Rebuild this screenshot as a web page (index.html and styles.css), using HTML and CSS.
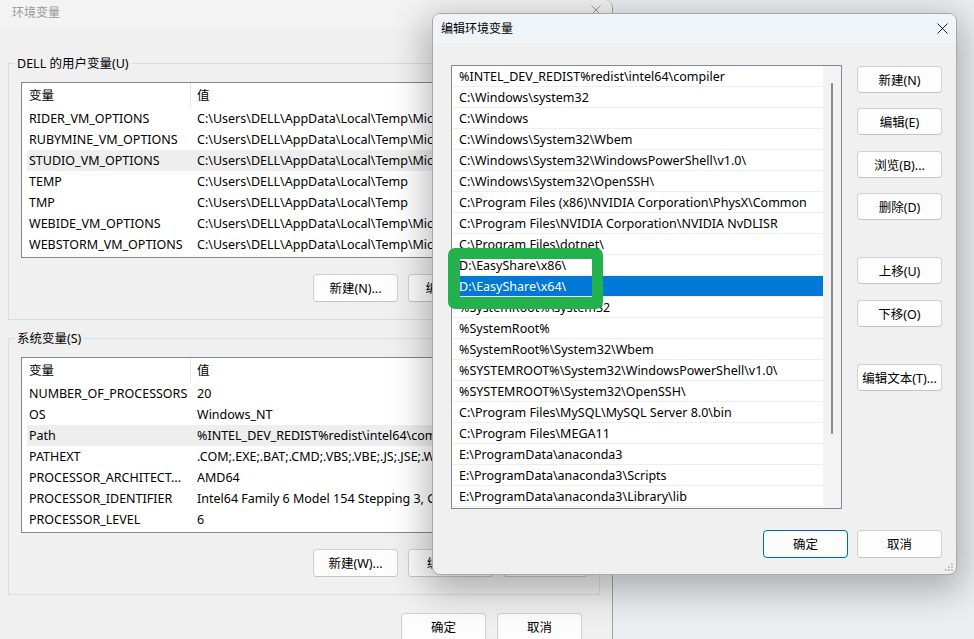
FILE: index.html
```html
<!DOCTYPE html>
<html lang="zh-CN">
<head>
<meta charset="utf-8">
<title>环境变量</title>
<link rel="stylesheet" href="styles.css">
</head>
<body>
<div class="desktop">
  <section class="env">
    <header class="env-title">
      <span class="env-title-text">环境变量</span>
      <span class="env-close"><svg width="10" height="10" viewBox="0 0 10 10"><path d="M0.5 0.5L9.5 9.5M9.5 0.5L0.5 9.5" stroke="#9a9a9a" stroke-width="1" fill="none"/></svg></span>
    </header>
    <div class="env-body">
      <div class="group">
        <span class="group-label">DELL 的用户变量(U)</span>
        <div class="table">
          <div class="thead"><span class="c1">变量</span><span class="c2">值</span></div>
          <div class="row"><span class="c1">RIDER_VM_OPTIONS</span><span class="c2">C:\Users\DELL\AppData\Local\Temp\MicrosoftEdgeDownloads\jetbra\vmoptions\rider.vmoptions</span></div>
          <div class="row"><span class="c1">RUBYMINE_VM_OPTIONS</span><span class="c2">C:\Users\DELL\AppData\Local\Temp\MicrosoftEdgeDownloads\jetbra\vmoptions\rubymine.vmoptions</span></div>
          <div class="row hl"><span class="c1">STUDIO_VM_OPTIONS</span><span class="c2">C:\Users\DELL\AppData\Local\Temp\MicrosoftEdgeDownloads\jetbra\vmoptions\studio.vmoptions</span></div>
          <div class="row"><span class="c1">TEMP</span><span class="c2">C:\Users\DELL\AppData\Local\Temp</span></div>
          <div class="row"><span class="c1">TMP</span><span class="c2">C:\Users\DELL\AppData\Local\Temp</span></div>
          <div class="row"><span class="c1">WEBIDE_VM_OPTIONS</span><span class="c2">C:\Users\DELL\AppData\Local\Temp\MicrosoftEdgeDownloads\jetbra\vmoptions\webide.vmoptions</span></div>
          <div class="row"><span class="c1">WEBSTORM_VM_OPTIONS</span><span class="c2">C:\Users\DELL\AppData\Local\Temp\MicrosoftEdgeDownloads\jetbra\vmoptions\webstorm.vmoptions</span></div>
        </div>
        <div class="group-buttons">
          <button class="btn">新建(N)...</button>
          <button class="btn">编辑(E)...</button>
          <button class="btn">删除(D)</button>
        </div>
      </div>
      <div class="group">
        <span class="group-label">系统变量(S)</span>
        <div class="table">
          <div class="thead"><span class="c1">变量</span><span class="c2">值</span></div>
          <div class="row"><span class="c1">NUMBER_OF_PROCESSORS</span><span class="c2">20</span></div>
          <div class="row"><span class="c1">OS</span><span class="c2">Windows_NT</span></div>
          <div class="row hl"><span class="c1">Path</span><span class="c2">%INTEL_DEV_REDIST%redist\intel64\compiler;C:\Windows\system32;C:\Windows;C:\Windows\System32\Wbem</span></div>
          <div class="row"><span class="c1">PATHEXT</span><span class="c2">.COM;.EXE;.BAT;.CMD;.VBS;.VBE;.JS;.JSE;.WSF;.WSH;.MSC</span></div>
          <div class="row"><span class="c1">PROCESSOR_ARCHITECT...</span><span class="c2">AMD64</span></div>
          <div class="row"><span class="c1">PROCESSOR_IDENTIFIER</span><span class="c2">Intel64 Family 6 Model 154 Stepping 3, GenuineIntel</span></div>
          <div class="row"><span class="c1">PROCESSOR_LEVEL</span><span class="c2">6</span></div>
        </div>
        <div class="group-buttons">
          <button class="btn">新建(W)...</button>
          <button class="btn">编辑(I)...</button>
          <button class="btn">删除(L)</button>
        </div>
      </div>
      <div class="dialog-buttons">
        <button class="btn">确定</button>
        <button class="btn">取消</button>
      </div>
    </div>
  </section>

  <section class="edit">
    <header class="edit-title">
      <span>编辑环境变量</span>
      <span class="edit-close"><svg width="11" height="11" viewBox="0 0 11 11"><path d="M0.5 0.5L10.5 10.5M10.5 0.5L0.5 10.5" stroke="#1a1a1a" stroke-width="1" fill="none"/></svg></span>
    </header>
    <div class="edit-body">
      <div class="edit-main">
        <div class="pathlist">
          <div class="rows">
            <div class="prow">%INTEL_DEV_REDIST%redist\intel64\compiler</div>
            <div class="prow">C:\Windows\system32</div>
            <div class="prow">C:\Windows</div>
            <div class="prow">C:\Windows\System32\Wbem</div>
            <div class="prow">C:\Windows\System32\WindowsPowerShell\v1.0\</div>
            <div class="prow">C:\Windows\System32\OpenSSH\</div>
            <div class="prow">C:\Program Files (x86)\NVIDIA Corporation\PhysX\Common</div>
            <div class="prow">C:\Program Files\NVIDIA Corporation\NVIDIA NvDLISR</div>
            <div class="prow">C:\Program Files\dotnet\</div>
            <div class="prow">D:\EasyShare\x86\</div>
            <div class="prow sel">D:\EasyShare\x64\</div>
            <div class="prow">%SystemRoot%\system32</div>
            <div class="prow">%SystemRoot%</div>
            <div class="prow">%SystemRoot%\System32\Wbem</div>
            <div class="prow">%SYSTEMROOT%\System32\WindowsPowerShell\v1.0\</div>
            <div class="prow">%SYSTEMROOT%\System32\OpenSSH\</div>
            <div class="prow">C:\Program Files\MySQL\MySQL Server 8.0\bin</div>
            <div class="prow">C:\Program Files\MEGA11</div>
            <div class="prow">E:\ProgramData\anaconda3</div>
            <div class="prow">E:\ProgramData\anaconda3\Scripts</div>
            <div class="prow">E:\ProgramData\anaconda3\Library\lib</div>
          </div>
          <div class="scroll"><div class="thumb"></div></div>
        </div>
        <div class="side">
          <button class="btn">新建(N)</button>
          <button class="btn">编辑(E)</button>
          <button class="btn">浏览(B)...</button>
          <button class="btn">删除(D)</button>
          <button class="btn sep">上移(U)</button>
          <button class="btn">下移(O)</button>
          <button class="btn sep">编辑文本(T)...</button>
        </div>
      </div>
      <div class="edit-foot">
        <button class="btn default">确定</button>
        <button class="btn">取消</button>
      </div>
    </div>
    <svg class="grip" width="9" height="9" viewBox="0 0 9 9">
      <rect x="6" y="0" width="2" height="2" fill="#c4c4c4"/>
      <rect x="3" y="3" width="2" height="2" fill="#c4c4c4"/>
      <rect x="6" y="3" width="2" height="2" fill="#c4c4c4"/>
      <rect x="0" y="6" width="2" height="2" fill="#c4c4c4"/>
      <rect x="3" y="6" width="2" height="2" fill="#c4c4c4"/>
      <rect x="6" y="6" width="2" height="2" fill="#c4c4c4"/>
    </svg>
  </section>

  <div class="mark"></div>
</div>
</body>
</html>
```

FILE: styles.css
```css
* { box-sizing: border-box; }
html, body { margin: 0; padding: 0; }
body {
  width: 974px;
  height: 639px;
  overflow: hidden;
  background: #eceef2;
  font-family: "Noto Sans", "Noto Sans CJK SC", sans-serif;
  font-size: 12.5px;
  color: #000;
}
.desktop {
  position: relative;
  width: 974px;
  height: 639px;
  overflow: hidden;
  background: #eceef2;
}

/* background window */
.env {
  position: absolute;
  left: 0;
  top: 0;
  width: 613px;
  height: 700px;
  background: #f0f0f0;
  border-right: 1px solid #a3a3a3;
  border-top-right-radius: 8px;
}
.env-title {
  height: 28px;
  display: flex;
  justify-content: space-between;
  padding: 2px 0 0 12px;
  background: #f3f3f3;
  border-top-right-radius: 8px;
  line-height: 21px;
  font-size: 12px;
  color: #9a9a9a;
}
.env-close {
  width: 32px;
  display: flex;
  justify-content: center;
  padding-top: 3px;
}
.env-body { padding: 35px 12px 0 8px; }
.group {
  position: relative;
  border: 1px solid #dcdcdc;
  padding: 18px 11px 17px 12px;
}
.group + .group { margin-top: 18px; }
.group-label {
  position: absolute;
  top: -10px;
  left: 5px;
  padding: 0 3px;
  background: #f0f0f0;
  line-height: 19px;
}
.table {
  height: 176px;
  border: 1px solid #828790;
  background: #fff;
  padding: 0 0 1px 5px;
  overflow: hidden;
}
.thead, .row { display: flex; white-space: nowrap; }
.thead { height: 25px; line-height: 25px; }
.row { height: 21px; line-height: 21px; }
.c1 { width: 164px; flex: none; padding-left: 2px; overflow: hidden; }
.thead .c1 { border-right: 1px solid #e5e5e5; }
.c2 { padding-left: 6px; }
.row.hl { background: #eeeeee; }

.btn {
  width: 85px;
  height: 28px;
  flex: none;
  border: 1px solid #d0d0d0;
  border-bottom-color: #c4c4c4;
  border-radius: 4px;
  background: #fdfdfd;
  font: inherit;
  color: #000;
  padding: 0;
  display: flex;
  align-items: center;
  justify-content: center;
}
.env .btn { padding-bottom: 2px; }
.group-buttons {
  display: flex;
  justify-content: flex-end;
  gap: 10px;
  margin-top: 16px;
}
.dialog-buttons {
  display: flex;
  justify-content: flex-end;
  gap: 11px;
  margin: 18px 18px 0 0;
}

/* foreground dialog */
.edit {
  position: absolute;
  left: 432px;
  top: 13px;
  width: 525px;
  height: 562px;
  background: #f0f0f0;
  border: 1px solid #a8a8a8;
  border-radius: 8px;
  box-shadow: 0 10px 36px 6px rgba(0, 0, 0, 0.28);
  display: flex;
  flex-direction: column;
}
.edit-title {
  height: 29px;
  flex: none;
  background: #eff4f9;
  border-radius: 7px 7px 0 0;
  display: flex;
  align-items: center;
  justify-content: space-between;
  padding: 0 0 2px 8px;
  font-size: 12px;
}
.edit-close {
  width: 28px;
  display: flex;
  justify-content: center;
  align-items: center;
  padding-top: 2px;
}
.edit-body {
  flex: 1;
  padding: 22px 14px 16px 18px;
  display: flex;
  flex-direction: column;
}
.edit-main { display: flex; gap: 15px; }
.pathlist {
  width: 391px;
  height: 444px;
  border: 1px solid #828790;
  background: #fff;
  display: flex;
}
.rows { width: 371px; flex: none; }
.prow {
  height: 21px;
  line-height: 22px;
  border-bottom: 1px solid #eeeeee;
  padding-left: 7px;
  white-space: nowrap;
  overflow: hidden;
}
.prow.sel { background: #0078d7; color: #fff; }
.scroll { flex: 1; background: #f3f3f3; }
.thumb {
  margin: 17px 0 0 8px;
  width: 2px;
  height: 351px;
  background: #8a8a8a;
  border-radius: 1px;
}
.side { display: flex; flex-direction: column; padding-top: 1px; }
.side .btn { height: 27px; }
.side .btn + .btn { margin-top: 15.33px; }
.side .btn.sep { margin-top: 37.5px; }
.edit-foot {
  display: flex;
  justify-content: flex-end;
  gap: 9px;
  margin-top: 21px;
}
.edit-foot .btn { padding-bottom: 1px; }
.btn.default { border-color: #0067c0; }
.grip { position: absolute; right: 2px; bottom: 2px; }

/* annotation frame */
.mark {
  position: absolute;
  left: 448px;
  top: 248px;
  width: 155px;
  height: 61px;
  border: solid #23b14d;
  border-width: 11px 11px 12px 12px;
  border-radius: 7px;
}
```
